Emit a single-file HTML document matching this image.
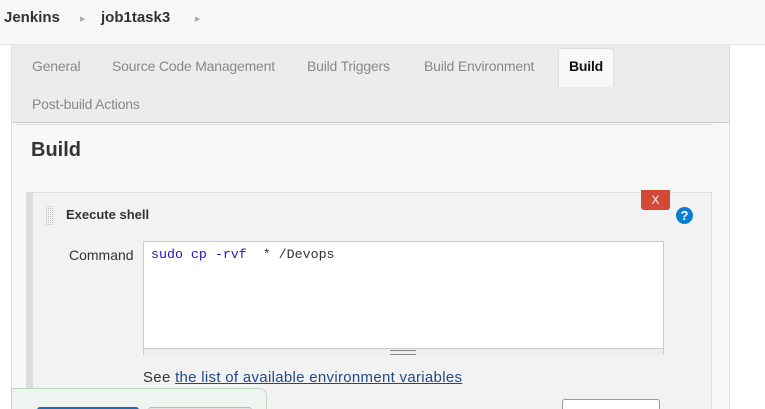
<!DOCTYPE html>
<html style="overflow:hidden;height:409px"><head><style>
body{margin:0;width:765px;height:409px;overflow:hidden;background:#fff;font-family:"Liberation Sans Narrow","Liberation Sans",sans-serif;position:relative}
.a{position:absolute;white-space:pre}
.tab{position:absolute;font-size:14px;color:#888;top:58px;letter-spacing:-0.2px}
</style></head><body>
<div class="a" style="left:0;top:0;width:765px;height:44px;background:#f7f7f7;border-bottom:1px solid #e4e4e4"></div>
<div class="a" style="left:4px;top:9px;font-size:15px;font-weight:bold;color:#333">Jenkins</div>
<div class="a" style="left:80px;top:15px;font-size:7px;color:#aaa">▶</div>
<div class="a" style="left:101px;top:9px;font-size:15px;font-weight:bold;color:#333">job1task3</div>
<div class="a" style="left:195px;top:15px;font-size:7px;color:#aaa">▶</div>
<div class="a" style="left:11px;top:45px;width:717px;height:364px;background:#f8f8f8;border-left:1px solid #ddd;border-right:1px solid #ddd"></div>
<div class="a" style="left:12px;top:45px;width:717px;height:77px;background:#ececec;border-bottom:1px solid #ccc"></div>
<div class="a" style="left:558px;top:48px;width:54px;height:38px;background:#f8f8f8;border:1px solid #ddd;border-bottom:none;border-radius:4px 4px 0 0"></div>
<div class="tab" style="left:32px">General</div>
<div class="tab" style="left:112px">Source Code Management</div>
<div class="tab" style="left:307px">Build Triggers</div>
<div class="tab" style="left:424px">Build Environment</div>
<div class="tab" style="left:569px;color:#111;font-weight:bold">Build</div>
<div class="tab" style="left:32px;top:96px">Post-build Actions</div>
<div class="a" style="left:16px;top:124px;width:697px;height:1px;background:#ddd"></div>
<div class="a" style="left:31px;top:139px;font-size:20px;font-weight:bold;color:#333">Build</div>
<div class="a" style="left:26px;top:192px;width:6px;height:217px;background:#ddd"></div>
<div class="a" style="left:32px;top:192px;width:678px;height:217px;background:#f2f2f2;border:1px solid #ddd;border-bottom:none"></div>
<div class="a" style="left:641px;top:190px;width:29px;height:20px;background:#d24939;border-radius:0 0 3px 3px;color:#fff;font-size:12px;text-align:center;line-height:20px">X</div>
<div class="a" style="left:676px;top:207px;width:17px;height:17px;border-radius:50%;background:#0b7dd0;color:#fff;font-size:13px;font-weight:bold;text-align:center;line-height:17px;font-family:'Liberation Sans',sans-serif">?</div>
<div class="a" style="left:46px;top:205px;width:7px;height:20px;background:repeating-linear-gradient(90deg,#c4c4c4 0 1px,transparent 1px 2px),#f2f2f2;-webkit-mask:repeating-linear-gradient(0deg,#000 0 1px,transparent 1px 2px)"></div>
<div class="a" style="left:66px;top:207px;font-size:13px;font-weight:bold;color:#333">Execute shell</div>
<div class="a" style="left:69px;top:247px;font-size:14px;color:#333">Command</div>
<div class="a" style="left:143px;top:241px;width:519px;height:112px;background:#fff;border:1px solid #ccc"></div>
<div class="a" style="left:144px;top:348px;width:519px;height:6px;background:#eee;border-top:1px solid #ccc"></div>
<div class="a" style="left:390px;top:350px;width:26px;height:3px;border-top:1px solid #888;border-bottom:1px solid #888"></div>
<div class="a" style="left:151px;top:247px;font-family:'Liberation Mono','DejaVu Sans Mono',monospace;font-size:13.3px;color:#2a10d0">sudo cp -rvf  <span style="color:#333">* /Devops</span></div>
<div class="a" style="left:143px;top:369px;font-size:15px;color:#333;letter-spacing:0.3px">See <span style="color:#204a87;text-decoration:underline">the list of available environment variables</span></div>
<div class="a" style="left:562px;top:399px;width:96px;height:20px;background:#fff;border:1px solid #999;border-radius:3px"></div>
<div class="a" style="left:11px;top:388px;width:254px;height:30px;background:#eef4ef;border:1px solid #b8d8c0;border-radius:0 8px 0 0"></div>
<div class="a" style="left:37px;top:407px;width:102px;height:10px;background:#1a6db5;border-radius:3px"></div>
<div class="a" style="left:148px;top:407px;width:102px;height:10px;background:#e4e4e4;border:1px solid #bbb;border-radius:3px"></div>
</body></html>
